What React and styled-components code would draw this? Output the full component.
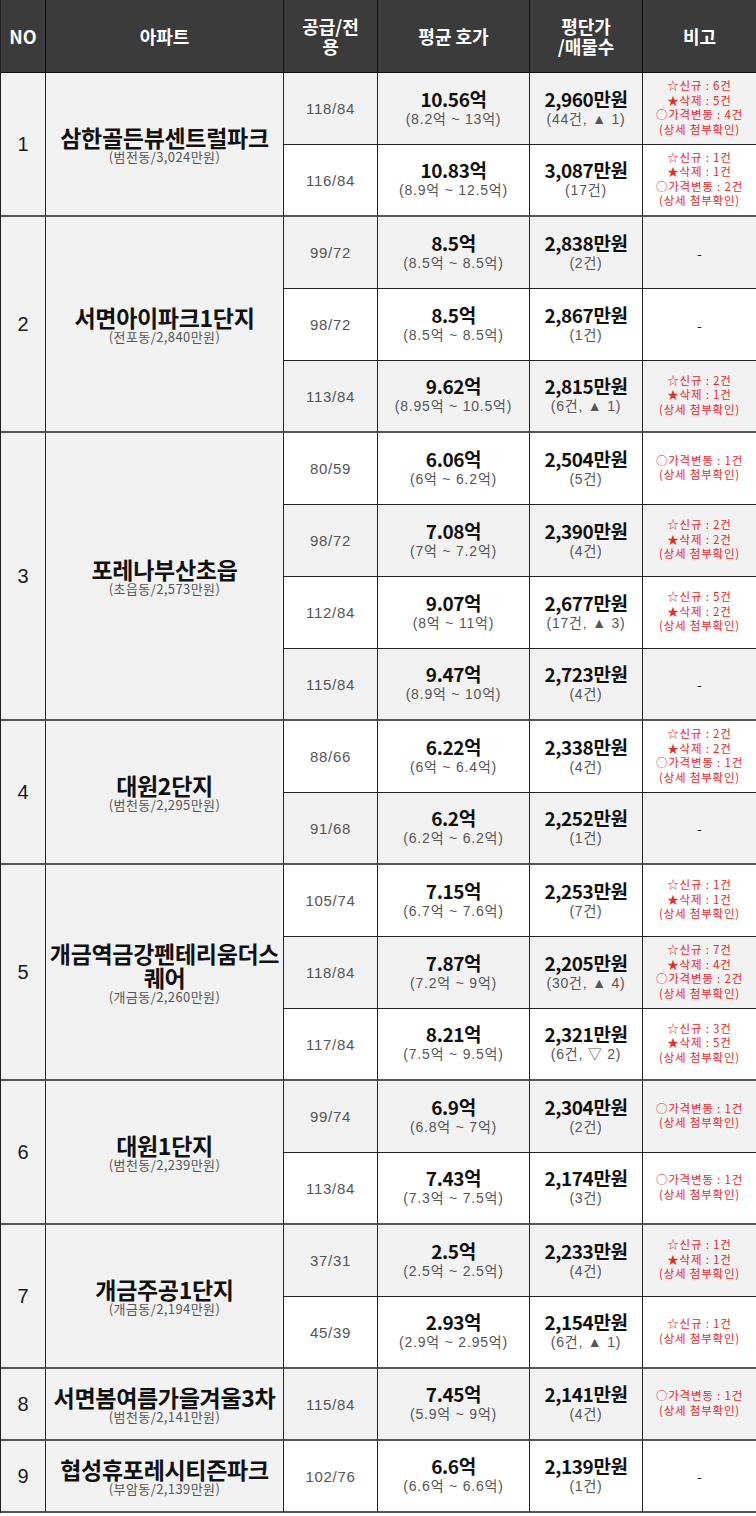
import React from 'react'
import styled, {createGlobalStyle} from 'styled-components'

const KR = `"Noto Sans CJK KR", "Noto Sans", sans-serif`
const THIN = `"Liberation Sans", "Noto Sans CJK KR", sans-serif`

const GlobalStyle = createGlobalStyle`
  html, body {
    margin: 0;
    padding: 0;
    background: #fff;
  }
  body {
    font-family: ${KR};
    color: #111;
  }
`

const Table = styled.div`
  display: grid;
  grid-template-columns: 45px 238px 94px 152px 113px 114px;
  grid-template-rows: 73px;
  grid-auto-rows: 72px;
  width: 756px;
  box-sizing: border-box;
  border-left: 1px solid #222;
`

const HeadCell = styled.div`
  display: flex;
  align-items: center;
  justify-content: center;
  text-align: center;
  box-sizing: border-box;
  background: #3b3b3b;
  color: #fff;
  font-family: ${props => (props.narrow ? `"Liberation Sans Narrow", ${KR}` : KR)};
  font-weight: 700;
  font-size: 18px;
  line-height: 20px;
  border-right: 1px solid #111;
  border-bottom: 1px solid #111;
`

const Cell = styled.div`
  display: flex;
  flex-direction: column;
  align-items: center;
  justify-content: center;
  text-align: center;
  box-sizing: border-box;
  min-width: 0;
  background: ${props => (props.shade ? '#f2f2f2' : '#fff')};
  border-right: 1px solid #222;
  border-bottom: ${props => (props.groupEnd ? '2px solid #555' : '1px solid #222')};
`

const GroupCell = styled(Cell)`
  grid-row: span ${props => props.span};
  background: #f2f2f2;
  border-bottom: 2px solid #555;
`

const No = styled.span`
  font-family: ${THIN};
  font-size: 20px;
  color: #1a1a1a;
`

const AptName = styled.div`
  font-weight: 700;
  font-size: 23px;
  line-height: 24px;
  letter-spacing: -0.3px;
  color: #111;
  padding: 0 2px;
`

const AptSub = styled.div`
  font-size: 13px;
  line-height: 15px;
  letter-spacing: 0.4px;
  color: #555;
`

const SizeText = styled.span`
  font-family: ${THIN};
  font-size: 15px;
  color: #555;
  letter-spacing: 0.7px;
`

const Main = styled.div`
  font-weight: 700;
  font-size: 19px;
  line-height: 21px;
  letter-spacing: -0.4px;
  color: #111;
`

const Sub = styled.div`
  font-family: ${THIN};
  font-size: 14px;
  line-height: 18px;
  color: #555;
  letter-spacing: 0.8px;
  margin-top: 1px;
  margin-bottom: 2px;
`

const Notes = styled.div`
  font-size: 11.5px;
  line-height: 14.5px;
  color: #e52b2b;
  letter-spacing: 0.8px;
  margin-bottom: 3px;
`

const Dash = styled.span`
  font-size: 14px;
  color: #222;
`

const NOTE_MORE = '(상세 첨부확인)'

const groups = [
  {
    no: 1, name: '삼한골든뷰센트럴파크', sub: '(범전동/3,024만원)',
    rows: [
      ['118/84', '10.56억', '(8.2억 ~ 13억)', '2,960만원', '(44건, ▲ 1)', ['☆신규 : 6건', '★삭제 : 5건', '○가격변동 : 4건']],
      ['116/84', '10.83억', '(8.9억 ~ 12.5억)', '3,087만원', '(17건)', ['☆신규 : 1건', '★삭제 : 1건', '○가격변동 : 2건']],
    ],
  },
  {
    no: 2, name: '서면아이파크1단지', sub: '(전포동/2,840만원)',
    rows: [
      ['99/72', '8.5억', '(8.5억 ~ 8.5억)', '2,838만원', '(2건)', null],
      ['98/72', '8.5억', '(8.5억 ~ 8.5억)', '2,867만원', '(1건)', null],
      ['113/84', '9.62억', '(8.95억 ~ 10.5억)', '2,815만원', '(6건, ▲ 1)', ['☆신규 : 2건', '★삭제 : 1건']],
    ],
  },
  {
    no: 3, name: '포레나부산초읍', sub: '(초읍동/2,573만원)',
    rows: [
      ['80/59', '6.06억', '(6억 ~ 6.2억)', '2,504만원', '(5건)', ['○가격변동 : 1건']],
      ['98/72', '7.08억', '(7억 ~ 7.2억)', '2,390만원', '(4건)', ['☆신규 : 2건', '★삭제 : 2건']],
      ['112/84', '9.07억', '(8억 ~ 11억)', '2,677만원', '(17건, ▲ 3)', ['☆신규 : 5건', '★삭제 : 2건']],
      ['115/84', '9.47억', '(8.9억 ~ 10억)', '2,723만원', '(4건)', null],
    ],
  },
  {
    no: 4, name: '대원2단지', sub: '(범천동/2,295만원)',
    rows: [
      ['88/66', '6.22억', '(6억 ~ 6.4억)', '2,338만원', '(4건)', ['☆신규 : 2건', '★삭제 : 2건', '○가격변동 : 1건']],
      ['91/68', '6.2억', '(6.2억 ~ 6.2억)', '2,252만원', '(1건)', null],
    ],
  },
  {
    no: 5, name: '개금역금강펜테리움더스퀘어', sub: '(개금동/2,260만원)',
    rows: [
      ['105/74', '7.15억', '(6.7억 ~ 7.6억)', '2,253만원', '(7건)', ['☆신규 : 1건', '★삭제 : 1건']],
      ['118/84', '7.87억', '(7.2억 ~ 9억)', '2,205만원', '(30건, ▲ 4)', ['☆신규 : 7건', '★삭제 : 4건', '○가격변동 : 2건']],
      ['117/84', '8.21억', '(7.5억 ~ 9.5억)', '2,321만원', '(6건, ▽ 2)', ['☆신규 : 3건', '★삭제 : 5건']],
    ],
  },
  {
    no: 6, name: '대원1단지', sub: '(범천동/2,239만원)',
    rows: [
      ['99/74', '6.9억', '(6.8억 ~ 7억)', '2,304만원', '(2건)', ['○가격변동 : 1건']],
      ['113/84', '7.43억', '(7.3억 ~ 7.5억)', '2,174만원', '(3건)', ['○가격변동 : 1건']],
    ],
  },
  {
    no: 7, name: '개금주공1단지', sub: '(개금동/2,194만원)',
    rows: [
      ['37/31', '2.5억', '(2.5억 ~ 2.5억)', '2,233만원', '(4건)', ['☆신규 : 1건', '★삭제 : 1건']],
      ['45/39', '2.93억', '(2.9억 ~ 2.95억)', '2,154만원', '(6건, ▲ 1)', ['☆신규 : 1건']],
    ],
  },
  {
    no: 8, name: '서면봄여름가을겨울3차', sub: '(범천동/2,141만원)',
    rows: [
      ['115/84', '7.45억', '(5.9억 ~ 9억)', '2,141만원', '(4건)', ['○가격변동 : 1건']],
    ],
  },
  {
    no: 9, name: '협성휴포레시티즌파크', sub: '(부암동/2,139만원)',
    rows: [
      ['102/76', '6.6억', '(6.6억 ~ 6.6억)', '2,139만원', '(1건)', null],
    ],
  },
]

function App() {
  let index = 0
  return (
    <>
      <GlobalStyle />
      <Table>
        <HeadCell narrow>NO</HeadCell>
        <HeadCell>아파트</HeadCell>
        <HeadCell>공급/전<br />용</HeadCell>
        <HeadCell>평균 호가</HeadCell>
        <HeadCell>평단가<br />/매물수</HeadCell>
        <HeadCell>비고</HeadCell>

        {groups.map(group => (
          <React.Fragment key={group.no}>
            <GroupCell span={group.rows.length}>
              <No>{group.no}</No>
            </GroupCell>
            <GroupCell span={group.rows.length}>
              <AptName>{group.name}</AptName>
              <AptSub>{group.sub}</AptSub>
            </GroupCell>
            {group.rows.map(([size, avg, range, unit, count, notes], i) => {
              const shade = index++ % 2 === 0
              const groupEnd = i === group.rows.length - 1
              return (
                <React.Fragment key={size + i}>
                  <Cell shade={shade} groupEnd={groupEnd}>
                    <SizeText>{size}</SizeText>
                  </Cell>
                  <Cell shade={shade} groupEnd={groupEnd}>
                    <Main>{avg}</Main>
                    <Sub>{range}</Sub>
                  </Cell>
                  <Cell shade={shade} groupEnd={groupEnd}>
                    <Main>{unit}</Main>
                    <Sub>{count}</Sub>
                  </Cell>
                  <Cell shade={shade} groupEnd={groupEnd}>
                    {notes ? (
                      <Notes>
                        {notes.map(n => <div key={n}>{n}</div>)}
                        <div>{NOTE_MORE}</div>
                      </Notes>
                    ) : (
                      <Dash>-</Dash>
                    )}
                  </Cell>
                </React.Fragment>
              )
            })}
          </React.Fragment>
        ))}
      </Table>
    </>
  )
}

export default App
